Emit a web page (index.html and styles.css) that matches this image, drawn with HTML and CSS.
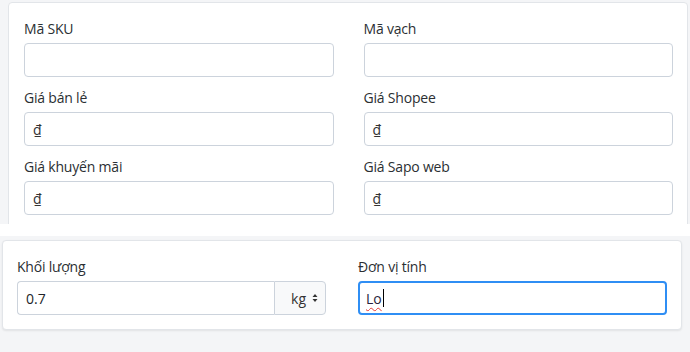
FILE: index.html
```html
<!DOCTYPE html>
<html lang="vi">
<head>
<meta charset="utf-8">
<link rel="stylesheet" href="styles.css">
</head>
<body>
<div class="scroll-area">
  <div class="card card-top">
    <div class="grid grid-top">
      <div class="field">
        <label class="label">Mã SKU</label>
        <div class="input"></div>
      </div>
      <div class="field">
        <label class="label">Mã vạch</label>
        <div class="input"></div>
      </div>
      <div class="field">
        <label class="label">Giá bán lẻ</label>
        <div class="input"><span class="cur">₫</span></div>
      </div>
      <div class="field">
        <label class="label">Giá Shopee</label>
        <div class="input"><span class="cur">₫</span></div>
      </div>
      <div class="field">
        <label class="label">Giá khuyến mãi</label>
        <div class="input"><span class="cur">₫</span></div>
      </div>
      <div class="field">
        <label class="label">Giá Sapo web</label>
        <div class="input"><span class="cur">₫</span></div>
      </div>
    </div>
  </div>
</div>
<div class="divider"></div>
<div class="bottom-area">
  <div class="card card-bottom">
    <div class="grid grid-bottom">
      <div class="field field-last">
        <label class="label">Khối lượng</label>
        <div class="input-group">
          <div class="input input-left">0.7</div>
          <div class="unit">
            <span>kg</span>
            <svg class="arrows" width="6" height="10" viewBox="0 0 6 10"><path d="M3 1 L5.5 4 L0.5 4 Z M3 9 L5.5 6 L0.5 6 Z" fill="#333"/></svg>
          </div>
        </div>
      </div>
      <div class="field field-last">
        <label class="label">Đơn vị tính</label>
        <div class="input input-focus"><span class="typed">Lo</span><span class="caret"></span></div>
      </div>
    </div>
  </div>
</div>
</body>
</html>
```

FILE: styles.css
```css
* { box-sizing: border-box; }
html, body {
  margin: 0;
  padding: 0;
}
body {
  width: 690px;
  height: 352px;
  overflow: hidden;
  background: #f4f5f7;
  font-family: "Open Sans", "Noto Sans", sans-serif;
  font-size: 14px;
  color: #212529;
}
.scroll-area {
  height: 224px;
  overflow: hidden;
  padding: 2px 2px 0 8px;
}
.card {
  background: #fff;
  border: 1px solid #e2e5e9;
  border-radius: 4px;
}
.card-top {
  padding: 15px 14px 15px 15px;
}
.grid {
  display: grid;
  grid-template-columns: 1fr 1fr;
}
.grid-top { column-gap: 30px; }
.grid-bottom { column-gap: 32px; }
.field {
  display: flex;
  flex-direction: column;
  margin-bottom: 14px;
}
.grid-top .field { margin-bottom: 10px; }
.field-last { margin-bottom: 0; }
.label {
  line-height: 21px;
  margin-bottom: 4px;
  color: #2b2f33;
  letter-spacing: -0.2px;
}
.input {
  height: 34px;
  border: 1px solid #ccd3dc;
  border-radius: 4px;
  background: #fff;
  display: flex;
  align-items: center;
  padding: 0 8px;
  color: #212529;
  font-size: 14px;
}
.cur {
  font-size: 14px;
  color: #333;
}
.divider {
  height: 12px;
  background: #fff;
}
.bottom-area {
  padding: 4px 8px 0 2px;
}
.card-bottom {
  padding: 15px 14px 14px 14px;
  box-shadow: 0 1px 2px rgba(0, 0, 0, 0.08);
}
.input-group {
  display: flex;
  height: 34px;
}
.input-left {
  flex: 1;
  border-radius: 4px 0 0 4px;
  border-right: none;
}
.unit {
  width: 52px;
  height: 34px;
  border: 1px solid #ccd3dc;
  border-radius: 0 4px 4px 0;
  background: #f8f9fa;
  display: flex;
  align-items: center;
  justify-content: flex-end;
  gap: 6px;
  padding-right: 7px;
  color: #333;
}
.arrows { display: block; }
.input-focus {
  border: 2px solid #2f8ef4;
  padding-left: 6px;
}
.typed {
  text-decoration: underline wavy #e53935;
  text-decoration-thickness: 1px;
  text-underline-offset: 3px;
  text-decoration-skip-ink: none;
  color: #2a1f3d;
}
.caret {
  display: inline-block;
  width: 1px;
  height: 18px;
  background: #000;
  margin-left: 1px;
}
```
